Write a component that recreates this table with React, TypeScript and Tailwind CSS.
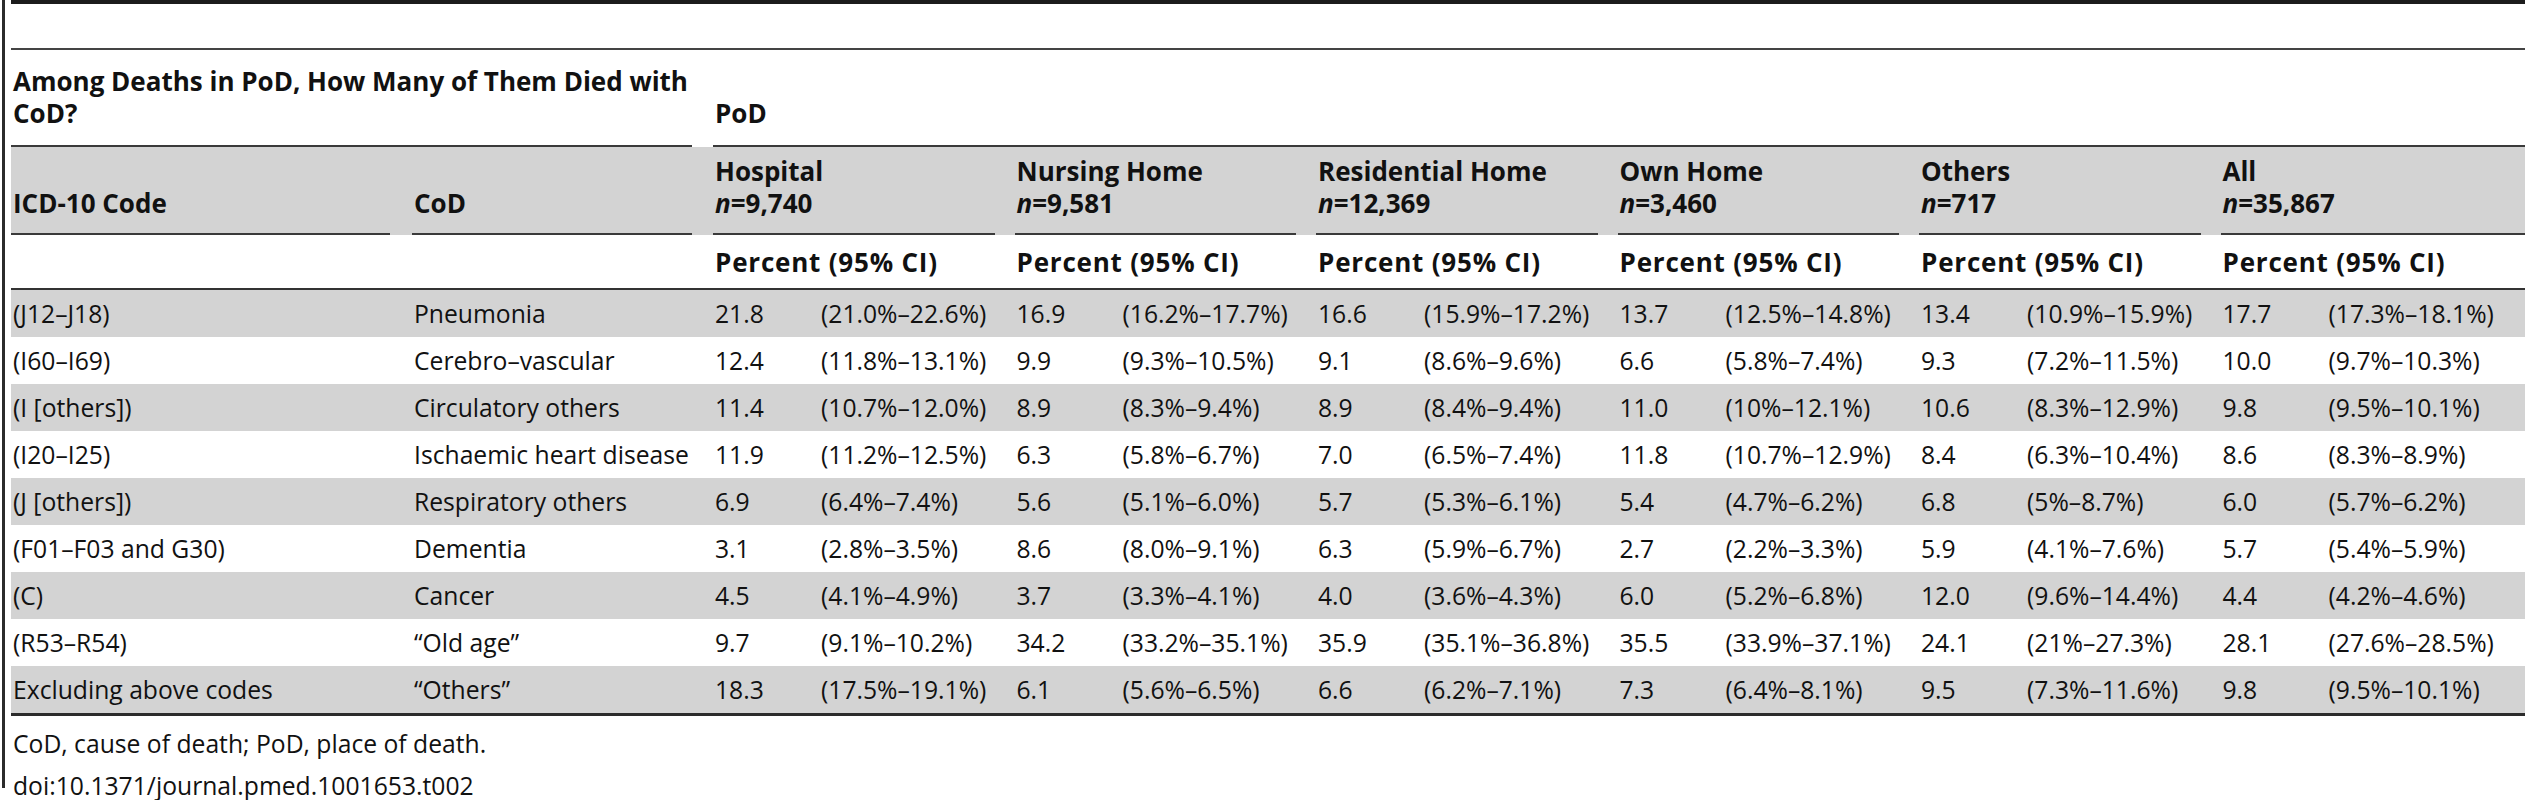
const GROUPS = [
  { name: 'Hospital', n: '9,740' },
  { name: 'Nursing Home', n: '9,581' },
  { name: 'Residential Home', n: '12,369' },
  { name: 'Own Home', n: '3,460' },
  { name: 'Others', n: '717' },
  { name: 'All', n: '35,867' },
];

// [ICD-10 code, cause of death, then value / CI pairs per place of death]
const ROWS: [string, string, string[]][] = [
  ['(J12–J18)', 'Pneumonia', ['21.8', '(21.0%–22.6%)', '16.9', '(16.2%–17.7%)', '16.6', '(15.9%–17.2%)', '13.7', '(12.5%–14.8%)', '13.4', '(10.9%–15.9%)', '17.7', '(17.3%–18.1%)']],
  ['(I60–I69)', 'Cerebro–vascular', ['12.4', '(11.8%–13.1%)', '9.9', '(9.3%–10.5%)', '9.1', '(8.6%–9.6%)', '6.6', '(5.8%–7.4%)', '9.3', '(7.2%–11.5%)', '10.0', '(9.7%–10.3%)']],
  ['(I [others])', 'Circulatory others', ['11.4', '(10.7%–12.0%)', '8.9', '(8.3%–9.4%)', '8.9', '(8.4%–9.4%)', '11.0', '(10%–12.1%)', '10.6', '(8.3%–12.9%)', '9.8', '(9.5%–10.1%)']],
  ['(I20–I25)', 'Ischaemic heart disease', ['11.9', '(11.2%–12.5%)', '6.3', '(5.8%–6.7%)', '7.0', '(6.5%–7.4%)', '11.8', '(10.7%–12.9%)', '8.4', '(6.3%–10.4%)', '8.6', '(8.3%–8.9%)']],
  ['(J [others])', 'Respiratory others', ['6.9', '(6.4%–7.4%)', '5.6', '(5.1%–6.0%)', '5.7', '(5.3%–6.1%)', '5.4', '(4.7%–6.2%)', '6.8', '(5%–8.7%)', '6.0', '(5.7%–6.2%)']],
  ['(F01–F03 and G30)', 'Dementia', ['3.1', '(2.8%–3.5%)', '8.6', '(8.0%–9.1%)', '6.3', '(5.9%–6.7%)', '2.7', '(2.2%–3.3%)', '5.9', '(4.1%–7.6%)', '5.7', '(5.4%–5.9%)']],
  ['(C)', 'Cancer', ['4.5', '(4.1%–4.9%)', '3.7', '(3.3%–4.1%)', '4.0', '(3.6%–4.3%)', '6.0', '(5.2%–6.8%)', '12.0', '(9.6%–14.4%)', '4.4', '(4.2%–4.6%)']],
  ['(R53–R54)', '“Old age”', ['9.7', '(9.1%–10.2%)', '34.2', '(33.2%–35.1%)', '35.9', '(35.1%–36.8%)', '35.5', '(33.9%–37.1%)', '24.1', '(21%–27.3%)', '28.1', '(27.6%–28.5%)']],
  ['Excluding above codes', '“Others”', ['18.3', '(17.5%–19.1%)', '6.1', '(5.6%–6.5%)', '6.6', '(6.2%–7.1%)', '7.3', '(6.4%–8.1%)', '9.5', '(7.3%–11.6%)', '9.8', '(9.5%–10.1%)']],
];

const COLS =
  'grid grid-cols-[401px_301px_106px_195.5px_106px_195.5px_106px_195.5px_106px_195.5px_106px_195.5px_106px_1fr]';

export default function App() {
  return (
    <div className="min-h-[800px] bg-white pl-[2px] font-['Open_Sans',sans-serif] text-[24.7px] leading-[32px] text-[#111]">
      <div className="flex h-[788px] flex-col border-l-[3px] border-[#2b2b2b] pl-[6px]">
        {/* Top rule */}
        <div className="h-[4px] shrink-0 bg-[#1c1c1c]" />
        <div className="h-[44px] shrink-0" />
        <div className="h-[2px] shrink-0 bg-[#444]" />

        {/* Title row */}
        <div className={`${COLS} h-[97px] shrink-0 text-[26px] font-bold`}>
          <div className="col-span-2 mr-[21px] flex flex-col justify-end border-b-2 border-[#3a3a3a] pb-[16px] pl-[2px] whitespace-nowrap">
            <span>Among Deaths in PoD, How Many of Them Died with</span>
            <span>CoD?</span>
          </div>
          <div className="col-span-12 flex flex-col justify-end border-b-2 border-[#3a3a3a] pb-[16px] pl-[2px]">
            PoD
          </div>
        </div>

        {/* Place of death groups */}
        <div className={`${COLS} h-[88px] shrink-0 bg-[#d3d3d3] text-[26px] font-bold`}>
          <div className="mr-[22px] flex flex-col justify-end border-b-2 border-[#3a3a3a] pb-[14px] pl-[2px]">ICD-10 Code</div>
          <div className="mr-[21px] flex flex-col justify-end border-b-2 border-[#3a3a3a] pb-[14px] pl-[2px]">CoD</div>
          {GROUPS.map((g, i) => (
            <div
              key={g.name}
              className={`col-span-2 flex flex-col justify-end border-b-2 border-[#3a3a3a] pb-[14px] pl-[2px] whitespace-nowrap ${i < GROUPS.length - 1 ? 'mr-[20px]' : ''}`}
            >
              <span>{g.name}</span>
              <span>
                <i>n</i>={g.n}
              </span>
            </div>
          ))}
        </div>

        {/* Sub heading */}
        <div className={`${COLS} h-[53px] shrink-0 items-center text-[26px] font-bold`}>
          <div />
          <div />
          {GROUPS.map(g => (
            <div key={g.name} className="col-span-2 pl-[2px] tracking-[0.8px] whitespace-nowrap">
              Percent (95% CI)
            </div>
          ))}
        </div>
        <div className="h-[2px] shrink-0 bg-[#333]" />

        {/* Data rows */}
        {ROWS.map(([code, cod, vals], r) => (
          <div
            key={code}
            className={`${COLS} h-[47px] shrink-0 items-center ${r % 2 === 0 ? 'bg-[#d3d3d3]' : ''}`}
          >
            <div className="pl-[2px] whitespace-nowrap">{code}</div>
            <div className="pl-[2px] whitespace-nowrap">{cod}</div>
            {vals.map((v, i) => (
              <div key={i} className="pl-[2px] whitespace-nowrap">
                {v}
              </div>
            ))}
          </div>
        ))}
        <div className="h-[3px] shrink-0 bg-[#2b2b2b]" />

        {/* Footnote */}
        <div className="shrink-0 pt-[7px] pl-[2px] leading-[42px] whitespace-nowrap">
          <div>CoD, cause of death; PoD, place of death.</div>
          <div>doi:10.1371/journal.pmed.1001653.t002</div>
        </div>
      </div>
    </div>
  );
}
